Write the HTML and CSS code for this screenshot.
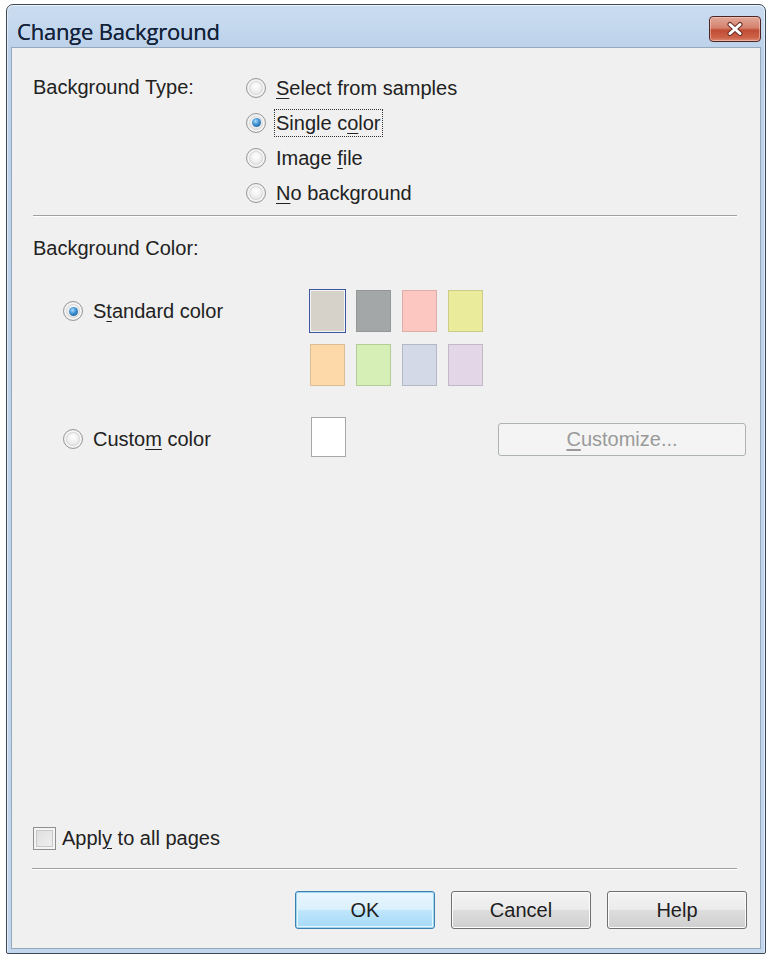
FILE: index.html
```html
<!DOCTYPE html>
<html>
<head>
<meta charset="utf-8">
<link rel="stylesheet" href="styles.css">
</head>
<body>
<div class="window">
  <div class="titlebar">
    <span class="title">Change Background</span>
    <span class="close-btn">
      <svg width="22" height="16" viewBox="0 0 22 16">
        <path d="M6 3.5 L16 12.5 M16 3.5 L6 12.5" stroke="#6a2e26" stroke-width="5" stroke-linecap="round"/>
        <path d="M6 3.5 L16 12.5 M16 3.5 L6 12.5" stroke="#ffffff" stroke-width="3" stroke-linecap="round"/>
      </svg>
    </span>
  </div>
  <div class="content">
    <div class="type-section">
      <div class="field-label">Background Type:</div>
      <div class="options">
        <div class="opt"><span class="radio"></span><span class="opt-text"><u>S</u>elect from samples</span></div>
        <div class="opt"><span class="radio checked"></span><span class="opt-text focus">Single c<u>o</u>lor</span></div>
        <div class="opt"><span class="radio"></span><span class="opt-text">Image <u>f</u>ile</span></div>
        <div class="opt"><span class="radio"></span><span class="opt-text"><u>N</u>o background</span></div>
      </div>
    </div>
    <div class="sep"></div>
    <div class="section-label">Background Color:</div>
    <div class="color-section">
      <div class="opt std-opt"><span class="radio checked"></span><span class="opt-text">S<u>t</u>andard color</span></div>
      <div class="swatches">
        <span class="swatch selected sw1"></span>
        <span class="swatch sw2"></span>
        <span class="swatch sw3"></span>
        <span class="swatch sw4"></span>
        <span class="swatch sw5"></span>
        <span class="swatch sw6"></span>
        <span class="swatch sw7"></span>
        <span class="swatch sw8"></span>
      </div>
      <div></div>
      <div class="opt custom-opt"><span class="radio"></span><span class="opt-text">Custo<u>m</u> color</span></div>
      <div class="custom-swatch-cell"><span class="custom-swatch"></span></div>
      <div class="btn disabled customize"><u>C</u>ustomize...</div>
    </div>
    <div class="spacer"></div>
    <div class="apply-row"><span class="checkbox"></span><span class="opt-text">Appl<u>y</u> to all pages</span></div>
    <div class="sep bottom-sep"></div>
    <div class="buttons">
      <div class="btn default">OK</div>
      <div class="btn">Cancel</div>
      <div class="btn">Help</div>
    </div>
  </div>
</div>
</body>
</html>
```
FILE: styles.css
```css
html, body {
  margin: 0;
  padding: 0;
  background: #ffffff;
}

body {
  font-family: "Liberation Sans", Arial, sans-serif;
  font-size: 20px;
  color: #222222;
}

.window {
  box-sizing: border-box;
  width: 760px;
  height: 950px;
  margin: 4px 0 0 6px;
  border: 1px solid #3d4856;
  border-radius: 7px 7px 2px 2px;
  background: linear-gradient(180deg, #cadcf0 0px, #bcd2ea 45px, #c2d7ee 100%);
  box-shadow: inset 0 1px 0 rgba(255,255,255,0.7), inset 1px 0 0 rgba(255,255,255,0.5), inset -1px 0 0 rgba(255,255,255,0.5);
  padding: 0 4px 4px 4px;
  display: flex;
  flex-direction: column;
}

.titlebar {
  height: 42px;
  display: flex;
  justify-content: space-between;
  align-items: flex-start;
  padding-left: 6px;
}

.title {
  font-family: "Open Sans", "Noto Sans", sans-serif;
  font-size: 22px;
  line-height: 30px;
  margin-top: 11px;
  color: #14223a;
  letter-spacing: -0.2px;
  text-shadow: 0 0 0.6px #14223a;
}

.close-btn {
  box-sizing: border-box;
  width: 52px;
  height: 26px;
  margin-top: 11px;
  border: 1px solid #4e2424;
  border-radius: 4px;
  background: linear-gradient(180deg, #e2a898 0%, #d4826e 45%, #c04c34 55%, #cc6248 85%, #dc8c74 100%);
  box-shadow: inset 0 0 0 1px rgba(255,215,205,0.5);
  display: flex;
  align-items: center;
  justify-content: center;
}

.content {
  flex: 1;
  background: #f0f0f0;
  border: 1px solid #97a8bb;
  display: flex;
  flex-direction: column;
}

.type-section {
  display: grid;
  grid-template-columns: 213px auto;
  padding: 22px 0 0 21px;
}

.field-label, .section-label {
  line-height: 34px;
  height: 34px;
}

.section-label {
  padding-left: 21px;
  margin-top: 14px;
}

.options {
  display: flex;
  flex-direction: column;
}

.opt {
  display: flex;
  align-items: center;
  height: 35px;
  gap: 10px;
}

.opt-text {
  line-height: 24px;
  white-space: nowrap;
}

.opt-text u {
  text-underline-offset: 3px;
  text-decoration-thickness: 1px;
}

.focus {
  outline: 1px dotted #333;
  outline-offset: 1px;
}

.radio {
  box-sizing: border-box;
  width: 20px;
  height: 20px;
  border-radius: 50%;
  border: 1px solid #989898;
  background: radial-gradient(circle at 50% 40%, #ffffff 0%, #ececec 45%, #cfcfcf 100%);
  box-shadow: inset 0 0 0 2px #f4f4f4, inset 0 0 0 3px #d8d8d8;
  display: flex;
  align-items: center;
  justify-content: center;
  flex-shrink: 0;
}

.radio.checked::after {
  content: "";
  width: 9px;
  height: 9px;
  border-radius: 50%;
  background: radial-gradient(circle at 40% 35%, #a9dcfa 0%, #3d8fd0 45%, #0f4f8c 100%);
}

.sep {
  border-top: 1px solid #a0a0a0;
  border-bottom: 1px solid #ffffff;
  margin: 5px 23px 0 21px;
}

.color-section {
  display: grid;
  grid-template-columns: 247px 188px 248px;
  grid-template-rows: auto 40px;
  row-gap: 31px;
  padding-left: 51px;
  margin-top: 25px;
}

.std-opt {
  height: 42px;
  align-self: start;
}

.custom-opt {
  height: 40px;
  padding-top: 3px;
  box-sizing: border-box;
}

.swatches {
  display: grid;
  grid-template-columns: repeat(4, 35px);
  grid-auto-rows: 42px;
  column-gap: 11px;
  row-gap: 12px;
}

.swatch {
  box-sizing: border-box;
  border: 1px solid;
}

.swatch.selected {
  outline: 1px solid #3c56a0;
  border-color: #f4f4f4;
}

.sw1 { background: #d6d2ca; }
.sw2 { background: #a3a7a7; border-color: #939797; }
.sw3 { background: #fbc7c0; border-color: #dcaea7; }
.sw4 { background: #ebeb9c; border-color: #cccc88; }
.sw5 { background: #fdd9a9; border-color: #dbbe95; }
.sw6 { background: #d5efb6; border-color: #b3cc98; }
.sw7 { background: #d3d9e6; border-color: #b2b8c4; }
.sw8 { background: #e3d6e7; border-color: #c3b8c6; }

.custom-swatch-cell {
  display: flex;
}

.custom-swatch {
  box-sizing: border-box;
  width: 35px;
  height: 40px;
  margin-left: 1px;
  background: #ffffff;
  border: 1px solid #a8a8a8;
}

.btn {
  box-sizing: border-box;
  width: 140px;
  height: 38px;
  border: 1px solid #707070;
  border-radius: 3px;
  background: linear-gradient(180deg, #f3f3f3 0%, #ebebeb 50%, #dddddd 51%, #cfcfcf 100%);
  box-shadow: inset 0 0 0 1px #fcfcfc;
  display: flex;
  align-items: center;
  justify-content: center;
  color: #1e1e1e;
}

.btn.default {
  border-color: #3c7fb1;
  background: linear-gradient(180deg, #eaf6fd 0%, #d9f0fc 50%, #bee6fd 51%, #a7d9f5 100%);
  box-shadow: inset 0 0 0 1px #9fd6f2, inset 0 0 0 2px #e6f5fd;
}

.btn.disabled.customize {
  width: 248px;
  height: 33px;
  margin-top: 6px;
  border-color: #adb2b5;
  background: #f4f4f4;
  box-shadow: none;
  color: #9a9a9a;
}

.btn.disabled u {
  text-underline-offset: 3px;
}

.spacer {
  flex: 1;
}

.apply-row {
  display: flex;
  align-items: center;
  gap: 6px;
  padding-left: 21px;
  height: 24px;
}

.checkbox {
  box-sizing: border-box;
  width: 23px;
  height: 23px;
  border: 1px solid #8e8f8f;
  background: linear-gradient(135deg, #dcdcdc 0%, #f2f2f2 100%);
  box-shadow: inset 0 0 0 2px #f4f4f4, inset 0 0 0 3px #c8c8c8;
  flex-shrink: 0;
}

.bottom-sep {
  margin: 18px 23px 0 20px;
}

.buttons {
  display: flex;
  justify-content: flex-end;
  gap: 16px;
  padding: 21px 13px 19px 0;
}
```
